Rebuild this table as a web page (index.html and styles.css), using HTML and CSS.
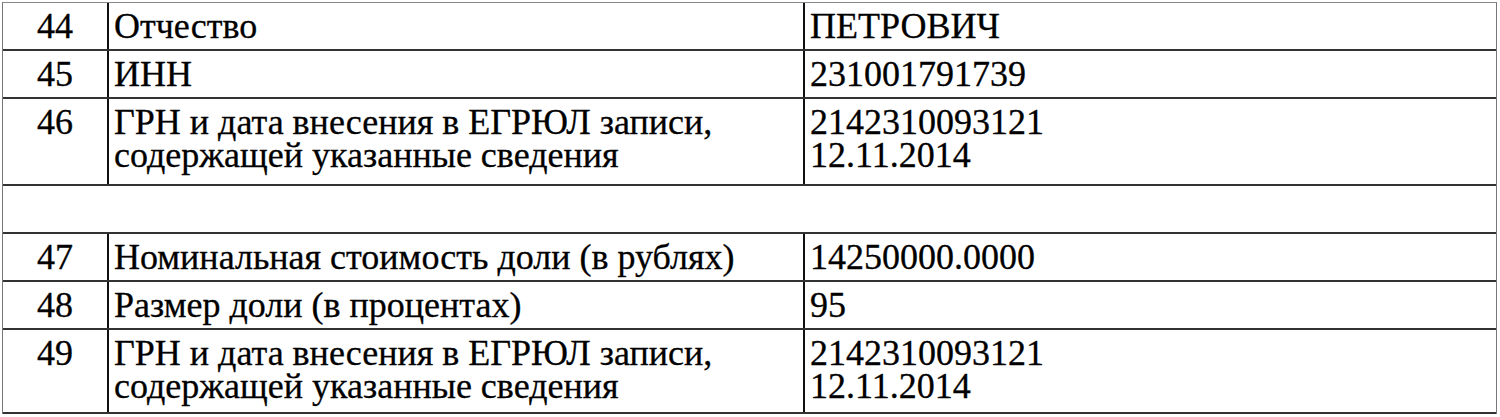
FILE: index.html
```html
<!DOCTYPE html>
<html lang="ru">
<head>
<meta charset="utf-8">
<link rel="stylesheet" href="styles.css">
</head>
<body>
<div class="grid">
  <div class="row r1"><div class="cell num">44</div><div class="cell">Отчество</div><div class="cell">ПЕТРОВИЧ</div></div>
  <div class="row r1"><div class="cell num">45</div><div class="cell">ИНН</div><div class="cell">231001791739</div></div>
  <div class="row r2"><div class="cell num">46</div><div class="cell"><div>ГРН и дата внесения в ЕГРЮЛ записи,</div><div>содержащей указанные сведения</div></div><div class="cell"><div>2142310093121</div><div>12.11.2014</div></div></div>
  <div class="row r1 blank"></div>
  <div class="row r1"><div class="cell num">47</div><div class="cell">Номинальная стоимость доли (в рублях)</div><div class="cell">14250000.0000</div></div>
  <div class="row r1"><div class="cell num">48</div><div class="cell">Размер доли (в процентах)</div><div class="cell">95</div></div>
  <div class="row r3"><div class="cell num">49</div><div class="cell"><div>ГРН и дата внесения в ЕГРЮЛ записи,</div><div>содержащей указанные сведения</div></div><div class="cell"><div>2142310093121</div><div>12.11.2014</div></div></div>
</div>
</body>
</html>
```
FILE: styles.css
```css
html, body {
  margin: 0;
  padding: 0;
  background: #ffffff;
}
body {
  padding: 2px 0 0 2px;
  font-family: "Liberation Serif", serif;
  font-size: 36px;
  color: #000;
}
.grid {
  width: 1495px;
  border-top: 1px solid #888;
  border-left: 1px solid #777;
  border-right: 1px solid #777;
  box-sizing: border-box;
  font-family: "Liberation Serif", serif;
}
.row {
  display: grid;
  grid-template-columns: 106px 696px 1fr;
  border-bottom: 2px solid #333;
  box-sizing: border-box;
}
.r1 { height: 48px; }
.r2 { height: 87px; }
.r3 { height: 84px; }
.cell {
  line-height: 33px;
  padding: 7px 5px 0 5px;
  white-space: nowrap;
  border-right: 2px solid #111;
  -webkit-text-stroke: 0.3px #000;
}
.cell:last-child { border-right: none; }
.cell > div { height: 33px; }
.num { text-align: center; }
```
